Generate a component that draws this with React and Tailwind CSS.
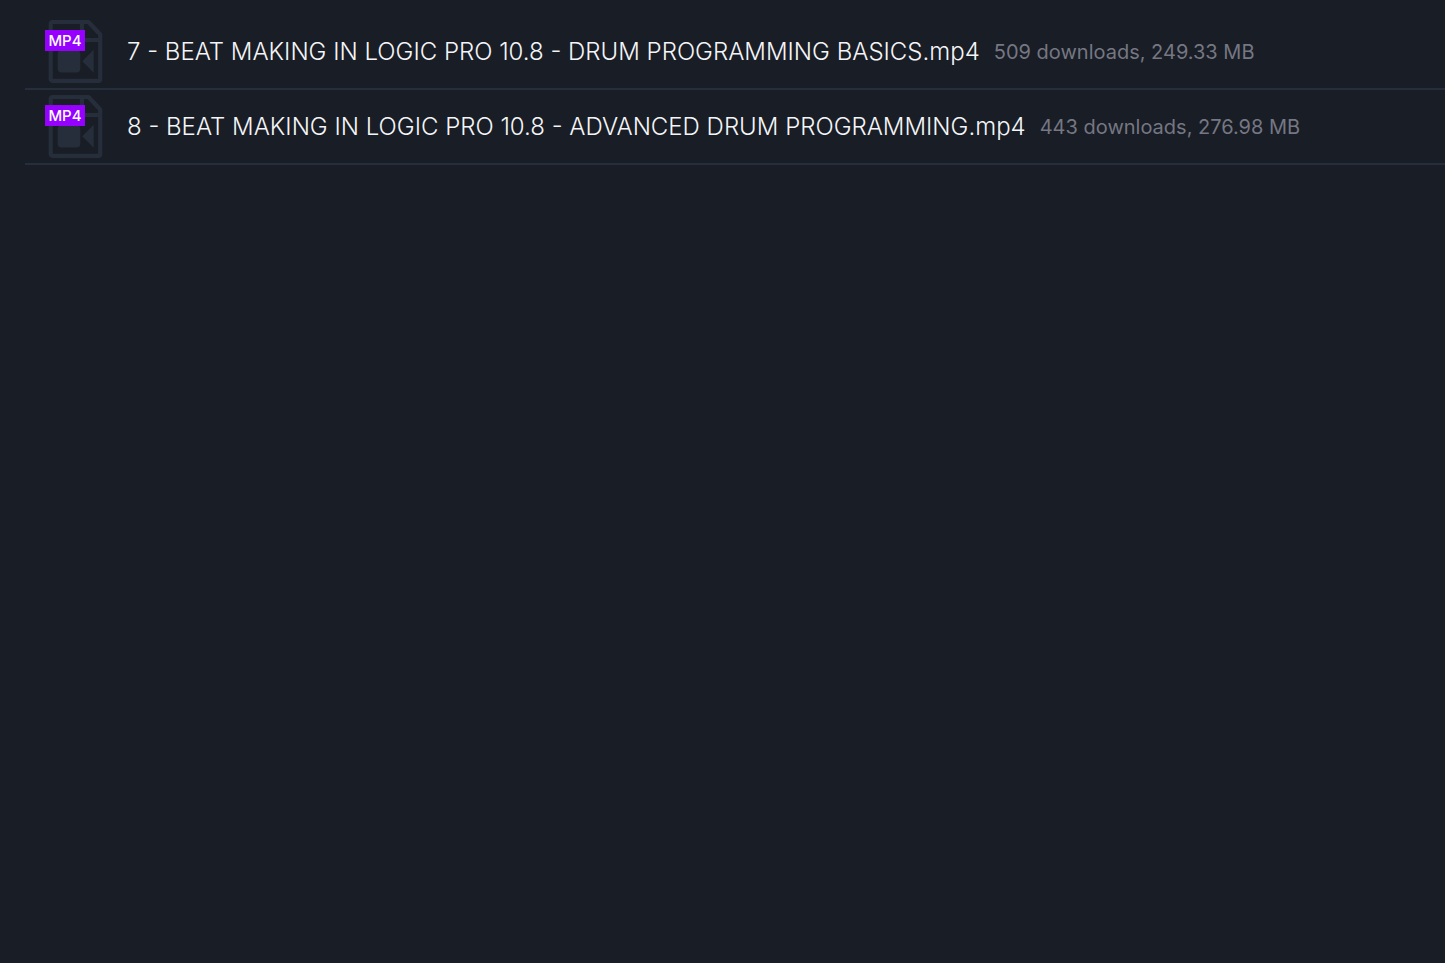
const files = [
  {
    name: "7 - BEAT MAKING IN LOGIC PRO 10.8 - DRUM PROGRAMMING BASICS.mp4",
    meta: "509 downloads, 249.33 MB",
  },
  {
    name: "8 - BEAT MAKING IN LOGIC PRO 10.8 - ADVANCED DRUM PROGRAMMING.mp4",
    meta: "443 downloads, 276.98 MB",
  },
];

function VideoFileIcon() {
  return (
    <svg width="55" height="65" viewBox="0 0 55 65" fill="none" aria-hidden="true">
      <path
        d="M4.7 3H40.5L52.2 15.5V60Q52.2 61.8 50.4 61.8H4.5Q2.7 61.8 2.7 60V4.8Q2.7 3 4.7 3Z"
        stroke="#272e3b"
        strokeWidth="4.2"
        strokeLinejoin="round"
      />
      <path d="M34 3V21H52.2" stroke="#272e3b" strokeWidth="4.2" />
      <rect x="9.7" y="31" width="22.6" height="22.6" rx="4" fill="#272e3b" />
      <path d="M34.3 42.3L45.7 30.8V53.8Z" fill="#272e3b" />
    </svg>
  );
}

function FileRow({ name, meta }) {
  return (
    <li className="flex items-center border-b-2 border-[#272e3b] py-1 pl-[23px]">
      <div className="relative shrink-0">
        <VideoFileIcon />
        <span className="absolute -left-[3px] top-[11px] flex h-[21px] w-10 items-center justify-center bg-[#9500ff] text-[15px] leading-5 font-medium text-white">
          MP4
        </span>
      </div>
      <a href="#" className="ml-6 text-[24px] leading-8 font-light whitespace-nowrap text-[#f4f5f8]">
        {name}
      </a>
      <span className="ml-3.5 text-[20px] leading-8 whitespace-nowrap text-[#757783]">{meta}</span>
    </li>
  );
}

export default function App() {
  return (
    <main className="min-h-screen overflow-hidden bg-[#191d25] pt-[15px] pl-[25px] font-['Inter',sans-serif]">
      <ul>
        {files.map((file) => (
          <FileRow key={file.name} {...file} />
        ))}
      </ul>
    </main>
  );
}
